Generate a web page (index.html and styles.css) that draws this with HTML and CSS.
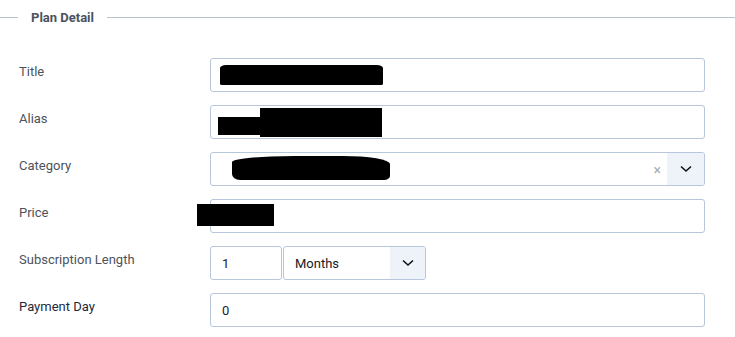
FILE: index.html
```html
<!DOCTYPE html>
<html lang="en">

<head>
    <meta charset="UTF-8">
    <meta name="viewport" content="width=device-width, initial-scale=1.0">
    <title>Plan Detail</title>
    <link rel="stylesheet" href="styles.css">
</head>

<body>
    <div class="panel">
        <div class="legend">
            <span class="legend-line short"></span>
            <span class="legend-text">Plan Detail</span>
            <span class="legend-line"></span>
        </div>

        <div class="row">
            <label class="label">Title</label>
            <div class="field">
                <div class="input"></div>
                <span class="redact r-title"></span>
            </div>
        </div>

        <div class="row">
            <label class="label">Alias</label>
            <div class="field">
                <div class="input"></div>
                <span class="redact r-alias-a"></span>
                <span class="redact r-alias-b"></span>
            </div>
        </div>

        <div class="row">
            <label class="label">Category</label>
            <div class="field">
                <div class="input select">
                    <span class="select-value"></span>
                    <span class="clear">&times;</span>
                    <span class="arrow">
                        <svg width="12" height="8" viewBox="0 0 12 8"><path d="M1 1.5 L6 6 L11 1.5" fill="none" stroke="#111" stroke-width="1.6"/></svg>
                    </span>
                </div>
                <span class="redact r-category"></span>
            </div>
        </div>

        <div class="row">
            <label class="label">Price</label>
            <div class="field">
                <div class="input"></div>
                <span class="redact r-price"></span>
            </div>
        </div>

        <div class="row">
            <label class="label">Subscription Length</label>
            <div class="field split">
                <div class="input number">1</div>
                <div class="input select unit">
                    <span class="select-value">Months</span>
                    <span class="arrow">
                        <svg width="12" height="8" viewBox="0 0 12 8"><path d="M1 1.5 L6 6 L11 1.5" fill="none" stroke="#111" stroke-width="1.6"/></svg>
                    </span>
                </div>
            </div>
        </div>

        <div class="row">
            <label class="label dark">Payment Day</label>
            <div class="field">
                <div class="input">0</div>
            </div>
        </div>
    </div>
</body>

</html>
```

FILE: styles.css
```css
:root {
    --border: #b7c6da;
    --label: #4d535b;
    --text: #1c2026;
    --arrow-bg: #eef3fa;
    --font: Roboto, "Liberation Sans", sans-serif;
}

body {
    margin: 0;
    background: #fff;
    font-family: var(--font);
    color: var(--text);
}

.panel {
    padding: 10px 30px 10px 0;
}

.legend {
    display: flex;
    align-items: center;
    height: 15px;
    margin-bottom: 33px;
}

.legend-line {
    flex: 1;
    height: 1px;
    background: #b6c3d3;
}

.legend-line.short {
    flex: 0 0 18px;
}

.legend-text {
    padding: 0 13px;
    font-size: 13px;
    font-weight: bold;
    color: #4a5260;
}

.legend-line:last-child {
    margin-right: -30px;
}

.row {
    display: flex;
    align-items: center;
    height: 34px;
    margin-bottom: 13px;
}

.label {
    width: 191px;
    padding-left: 19px;
    padding-bottom: 7px;
    font-size: 13px;
    color: var(--label);
}

.label.dark {
    color: #1e2a3a;
}

.field {
    flex: 1;
    position: relative;
    display: flex;
    height: 34px;
}

.input {
    flex: 1;
    box-sizing: border-box;
    height: 34px;
    border: 1px solid var(--border);
    border-radius: 3px;
    padding: 0 11px;
    display: flex;
    align-items: center;
    font-size: 13px;
    color: var(--text);
}

.select {
    padding: 0 0 0 11px;
    overflow: hidden;
}

.select-value {
    flex: 1;
}

.clear {
    color: #a9adb2;
    font-size: 14px;
    margin-right: 6px;
    padding-top: 2px;
}

.arrow {
    width: 37px;
    align-self: stretch;
    background: var(--arrow-bg);
    display: flex;
    align-items: center;
    justify-content: center;
}

.split {
    gap: 1px;
    flex: 0 0 216px;
}

.number {
    flex: 0 0 72px;
}

.unit {
    flex: 0 0 143px;
}

.unit .arrow {
    width: 35px;
}

/* redaction marks drawn over the screenshot values */
.redact {
    position: absolute;
    background: #000;
}

.r-title {
    left: 10px;
    top: 7px;
    width: 163px;
    height: 20px;
    border-radius: 6px 6px 2px 2px / 3px 3px 1px 1px;
}

.r-alias-a {
    left: 8px;
    top: 12px;
    width: 44px;
    height: 18px;
}

.r-alias-b {
    left: 50px;
    top: 3px;
    width: 122px;
    height: 29px;
}

.r-category {
    left: 22px;
    top: 4px;
    width: 158px;
    height: 24px;
    border-radius: 40% 30% 6px 8px / 6px 8px 4px 6px;
}

.r-price {
    left: -13px;
    top: 5px;
    width: 77px;
    height: 22px;
}
```
